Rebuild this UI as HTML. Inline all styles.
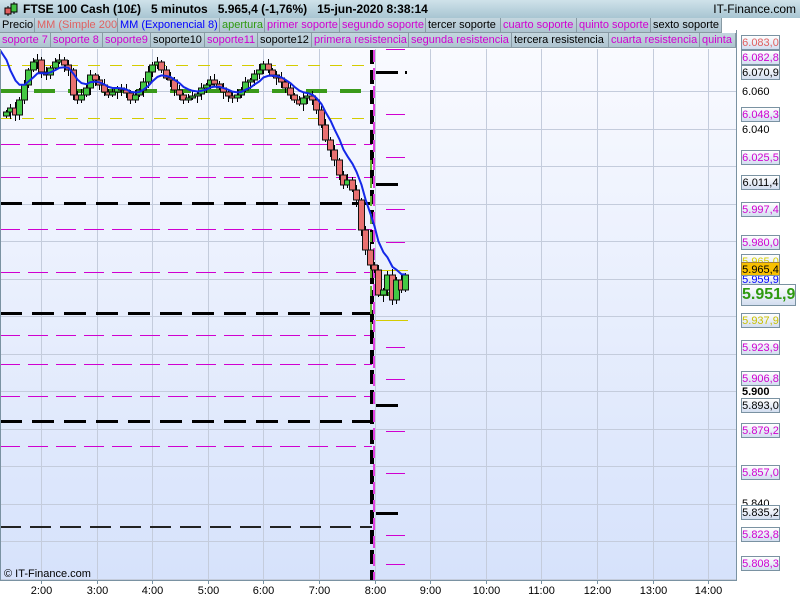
<!DOCTYPE html>
<html><head><meta charset="utf-8">
<style>
*{margin:0;padding:0;box-sizing:border-box}
body{width:800px;height:600px;overflow:hidden;background:#fff;font-family:"Liberation Sans",sans-serif;position:relative}
#top{position:absolute;left:0;top:0;width:800px;height:18px;background:linear-gradient(#cfe2ea,#a8c5d2);font-size:12px;font-weight:bold;color:#000;line-height:18px;z-index:5}
.row{position:absolute;left:0;height:15px;font-size:11px;line-height:14px;white-space:nowrap;z-index:5}
.tab{position:absolute;top:0;height:15px;background:linear-gradient(#c4d6df,#aec4d0);border-right:1px solid #889aa4;border-bottom:1px solid #889aa4;padding-left:2px;overflow:hidden}
.lab{position:absolute;left:741px;width:39px;height:15px;font-size:11px;line-height:14px;text-align:center;border:1px solid #7a92a2;background:linear-gradient(#fff,#d3def0);z-index:5}
.ax{position:absolute;left:742px;font-size:11px;color:#000;z-index:4}
.tm{position:absolute;top:585px;font-size:11px;width:40px;text-align:center;margin-left:-20px}
</style></head><body>
<div id="top">
<svg style="position:absolute;left:3px;top:1px" width="16" height="16"><line x1="5" y1="5" x2="5" y2="15" stroke="#000"/><rect x="2" y="7" width="6" height="6" fill="#e06060" stroke="#000"/><line x1="11" y1="1" x2="11" y2="13" stroke="#000"/><rect x="8" y="3" width="6" height="8" fill="#40c040" stroke="#000"/></svg>
<span style="position:absolute;left:23px">FTSE 100 Cash (10£)&nbsp;&nbsp;&nbsp;5 minutos&nbsp;&nbsp;&nbsp;5.965,4 (-1,76%)&nbsp;&nbsp;&nbsp;15-jun-2020 8:38:14</span>
<span style="position:absolute;right:4px;font-weight:normal;font-size:12px">IT-Finance.com</span>
</div>
<div class="row" style="top:18px;width:722px">
<div class="tab" style="left:0;width:35px">Precio</div>
<div class="tab" style="left:35px;width:83px;color:#e06060">MM (Simple 200)</div>
<div class="tab" style="left:118px;width:102px;color:#0000ff">MM (Exponencial 8)</div>
<div class="tab" style="left:220px;width:45px;color:#2f9a10">apertura</div>
<div class="tab" style="left:265px;width:75px;color:#d000d0">primer soporte</div>
<div class="tab" style="left:340px;width:86px;color:#d000d0">segundo soporte</div>
<div class="tab" style="left:426px;width:75px">tercer soporte</div>
<div class="tab" style="left:501px;width:76px;color:#d000d0">cuarto soporte</div>
<div class="tab" style="left:577px;width:74px;color:#d000d0">quinto soporte</div>
<div class="tab" style="left:651px;width:71px">sexto soporte</div>
</div>
<div class="row" style="top:33px">
<div class="tab" style="left:0;width:51px;color:#d000d0">soporte 7</div>
<div class="tab" style="left:51px;width:52px;color:#d000d0">soporte 8</div>
<div class="tab" style="left:103px;width:48px;color:#d000d0">soporte9</div>
<div class="tab" style="left:151px;width:54px">soporte10</div>
<div class="tab" style="left:205px;width:53px;color:#d000d0">soporte11</div>
<div class="tab" style="left:258px;width:54px">soporte12</div>
<div class="tab" style="left:312px;width:97px;color:#d000d0">primera resistencia</div>
<div class="tab" style="left:409px;width:103px;color:#d000d0">segunda resistencia</div>
<div class="tab" style="left:512px;width:97px">tercera resistencia</div>
<div class="tab" style="left:609px;width:91px;color:#d000d0">cuarta resistencia</div>
<div class="tab" style="left:700px;width:36px;color:#d000d0">quinta resistencia</div>
</div>
<svg id="ch" style="position:absolute;left:0;top:0" width="800" height="600">
<defs><linearGradient id="bg" x1="0" y1="0" x2="0" y2="1"><stop offset="0" stop-color="#f9faff"/><stop offset="1" stop-color="#d6e2fb"/></linearGradient></defs>
<rect x="0" y="49" width="736" height="531" fill="url(#bg)"/>
<g id="grid" stroke="#c4ccdc" stroke-width="1"></g>
<g id="lv"></g>
<g id="cd"></g>
<polyline id="ema" fill="none" stroke="#1428e8" stroke-width="2"/>
<line x1="736.5" y1="30" x2="736.5" y2="581" stroke="#7a92a2"/>
<line x1="0" y1="580.5" x2="737" y2="580.5" stroke="#7a92a2"/>
<line x1="0.5" y1="49" x2="0.5" y2="581" stroke="#7a92a2"/>
<text x="4" y="577" font-size="11" font-family="Liberation Sans">© IT-Finance.com</text>
</svg>
<div class="ax" style="top:86px">6.060</div>
<div class="ax" style="top:124px">6.040</div>
<div class="ax" style="top:386px;font-weight:bold">5.900</div>
<div class="ax" style="top:498px">5.840</div>
<div class="lab" style="top:35px;color:#e06060">6.083,0</div>
<div class="lab" style="top:50px;color:#d000d0">6.082,8</div>
<div class="lab" style="top:65px">6.070,9</div>
<div class="lab" style="top:107px;color:#d000d0">6.048,3</div>
<div class="lab" style="top:150px;color:#d000d0">6.025,5</div>
<div class="lab" style="top:175px">6.011,4</div>
<div class="lab" style="top:202px;color:#d000d0">5.997,4</div>
<div class="lab" style="top:235px;color:#d000d0">5.980,0</div>
<div class="lab" style="top:254px;color:#d8d000">5.965,0</div>
<div class="lab" style="top:262px;background:#f8c000;border-color:#a08040">5.965,4</div>
<div class="lab" style="top:275px;color:#0000ff;height:10px;line-height:8px;overflow:hidden">5.959,9</div>
<div class="lab" style="top:284px;width:55px;height:22px;font-size:16px;line-height:20px;font-weight:bold;color:#2f9a10">5.951,9</div>
<div class="lab" style="top:313px;color:#c8c000">5.937,9</div>
<div class="lab" style="top:340px;color:#d000d0">5.923,9</div>
<div class="lab" style="top:371px;color:#d000d0">5.906,8</div>
<div class="lab" style="top:398px">5.893,0</div>
<div class="lab" style="top:423px;color:#d000d0">5.879,2</div>
<div class="lab" style="top:465px;color:#d000d0">5.857,0</div>
<div class="lab" style="top:505px">5.835,2</div>
<div class="lab" style="top:527px;color:#d000d0">5.823,8</div>
<div class="lab" style="top:556px;color:#d000d0">5.808,3</div>
<div id="tms"></div>
<script>
(function(){
var NS="http://www.w3.org/2000/svg";
function el(p,t,a){var e=document.createElementNS(NS,t);for(var k in a)e.setAttribute(k,a[k]);p.appendChild(e);return e;}
var g=document.getElementById('grid');
var tl=["2:00","3:00","4:00","5:00","6:00","7:00","8:00","9:00","10:00","11:00","12:00","13:00","14:00"];
for(var i=0;i<13;i++){var x=Math.round(41+i*55.6)+0.5;el(g,'line',{x1:x,y1:49,x2:x,y2:580});
var d=document.createElement('div');d.className='tm';d.style.left=x+'px';d.textContent=tl[i];document.getElementById('tms').appendChild(d);
el(document.getElementById('ch'),'line',{x1:x,y1:580,x2:x,y2:584,stroke:'#7a92a2'});}
for(var i=0;i<14;i++){var y=Math.round(92+i*37.5)-0.5;if(y>49&&y<580)el(g,'line',{x1:0,y1:y,x2:736,y2:y});}
var lv=document.getElementById('lv');
function H(y,c,w,da,x1,x2){if(w%2==1)y+=0.5;el(lv,'line',{x1:x1||0,y1:y,x2:x2||372,y2:y,stroke:c,'stroke-width':w,'stroke-dasharray':da});}
H(65,'#d4cc00',1,'12 10');H(118,'#d4cc00',1,'12 10');
[144,177,229,272,335,364,396,446].forEach(function(y){H(y,'#d000d0',1,'20 8');});
[203,313,421].forEach(function(y){H(y,'#000',3,'22 10');});
H(527,'#222',2,'21 9');
H(91,'#3a9a1a',4,'21 13');
[49,114,157,209,242,347,379,431,473,535,564].forEach(function(y){H(y,'#d000d0',1,'',386,405);});
[72,184,405,513].forEach(function(y){H(y,'#000',3,'',376,398);});
H(72,'#000',3,'',405,407);
H(270,'#d4cc00',1,'',376,408);H(320,'#d4cc00',1,'',376,408);
H(294,'#3a9a1a',4,'',378,400);
el(lv,'line',{x1:372,y1:50,x2:372,y2:580,stroke:'#000','stroke-width':4,'stroke-dasharray':'14 6'});
el(lv,'line',{x1:374,y1:50,x2:374,y2:580,stroke:'#e040e0','stroke-width':2,'stroke-dasharray':'12 6'});
el(lv,'line',{x1:371,y1:160,x2:371,y2:330,stroke:'#60b030','stroke-width':2,'stroke-dasharray':'10 8'});
var ys=[112,108,115,100,85,70,62,60,72,75,68,62,60,65,70,95,100,95,88,75,80,85,92,95,92,88,90,93,100,95,90,82,72,65,62,70,78,80,90,95,100,98,96,94,88,85,80,84,88,92,96,98,95,90,82,80,74,70,64,70,75,78,82,88,95,100,104,98,96,100,110,125,140,150,160,175,185,180,190,200,230,250,265,270,295,290,275,300,280,290,275];
var cd=document.getElementById('cd'),n=ys.length,st=(405-6)/(n-1),pts=[],ema=45,k=2/9,prev=ys[0]+4;
for(var i=0;i<n;i++){var x=Math.round(6+i*st)+0.5,o=prev,c=ys[i];if(Math.abs(o-c)<2)c=o+2;
var tp=Math.min(o,c),bt=Math.max(o,c);var hw=(i*7)%5+2,lw=(i*5)%6+2;
el(cd,'line',{x1:x,y1:tp-hw,x2:x,y2:bt+lw,stroke:'#000'});
el(cd,'rect',{x:x-3,y:tp,width:6,height:bt-tp,fill:c<o?'#44c844':'#e87070',stroke:'#111','stroke-width':1});
ema=ema+k*(ys[i]-ema);pts.push(x.toFixed(1)+','+ema.toFixed(1));prev=ys[i];}
document.getElementById('ema').setAttribute('points','0,50 '+pts.join(' '));
})();
</script>
</body></html>
